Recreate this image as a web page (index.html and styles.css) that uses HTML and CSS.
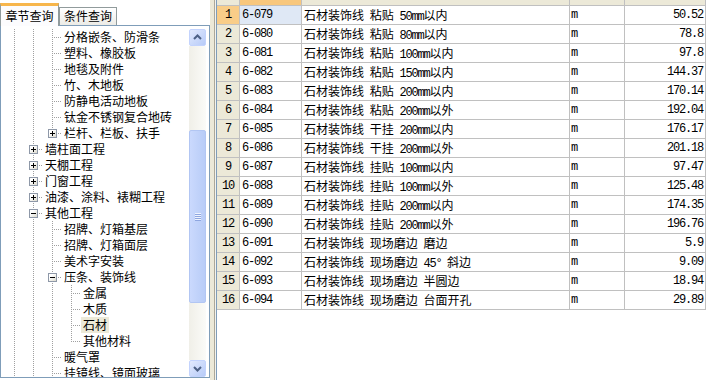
FILE: index.html
```html
<!DOCTYPE html>
<html lang="zh-CN">

<head>
    <meta charset="UTF-8">
    <title>定额查询</title>
    <link rel="stylesheet" href="styles.css">
</head>

<body>
    <div class="app">
        <!-- 左侧：章节树 -->
        <div class="side">
            <div class="tabs">
                <div class="tab active">章节查询</div>
                <div class="tab">条件查询</div>
            </div>
            <div class="tree_box">
                <div class="tree">
                    <div class="n"><span class="g"></span><span class="g"></span><span class="c"></span><span class="lb">分格嵌条、防滑条</span></div>
                    <div class="n"><span class="g"></span><span class="g"></span><span class="c"></span><span class="lb">塑料、橡胶板</span></div>
                    <div class="n"><span class="g"></span><span class="g"></span><span class="c"></span><span class="lb">地毯及附件</span></div>
                    <div class="n"><span class="g"></span><span class="g"></span><span class="c"></span><span class="lb">竹、木地板</span></div>
                    <div class="n"><span class="g"></span><span class="g"></span><span class="c"></span><span class="lb">防静电活动地板</span></div>
                    <div class="n"><span class="g"></span><span class="g"></span><span class="c"></span><span class="lb">钛金不锈钢复合地砖</span></div>
                    <div class="n"><span class="g"></span><span class="g"></span><span class="c last"><i class="box plus"></i></span><span class="lb">栏杆、栏板、扶手</span></div>
                    <div class="n"><span class="g"></span><span class="c"><i class="box plus"></i></span><span class="lb">墙柱面工程</span></div>
                    <div class="n"><span class="g"></span><span class="c"><i class="box plus"></i></span><span class="lb">天棚工程</span></div>
                    <div class="n"><span class="g"></span><span class="c"><i class="box plus"></i></span><span class="lb">门窗工程</span></div>
                    <div class="n"><span class="g"></span><span class="c"><i class="box plus"></i></span><span class="lb">油漆、涂料、裱糊工程</span></div>
                    <div class="n"><span class="g"></span><span class="c"><i class="box"></i></span><span class="lb">其他工程</span></div>
                    <div class="n"><span class="g"></span><span class="g"></span><span class="c"></span><span class="lb">招牌、灯箱基层</span></div>
                    <div class="n"><span class="g"></span><span class="g"></span><span class="c"></span><span class="lb">招牌、灯箱面层</span></div>
                    <div class="n"><span class="g"></span><span class="g"></span><span class="c"></span><span class="lb">美术字安装</span></div>
                    <div class="n"><span class="g"></span><span class="g"></span><span class="c"><i class="box"></i></span><span class="lb">压条、装饰线</span></div>
                    <div class="n"><span class="g"></span><span class="g"></span><span class="g"></span><span class="c"></span><span class="lb">金属</span></div>
                    <div class="n"><span class="g"></span><span class="g"></span><span class="g"></span><span class="c"></span><span class="lb">木质</span></div>
                    <div class="n"><span class="g"></span><span class="g"></span><span class="g"></span><span class="c"></span><span class="lb sel">石材</span></div>
                    <div class="n"><span class="g"></span><span class="g"></span><span class="g"></span><span class="c last"></span><span class="lb">其他材料</span></div>
                    <div class="n"><span class="g"></span><span class="g"></span><span class="c"></span><span class="lb">暖气罩</span></div>
                    <div class="n"><span class="g"></span><span class="g"></span><span class="c"></span><span class="lb">挂镜线、镜面玻璃</span></div>
                </div>
                <!-- 滚动条 -->
                <div class="vscroll">
                    <div class="sb_btn">
                        <svg width="15" height="15" viewBox="0 0 15 15"><polyline points="4,9 7.5,5.5 11,9" fill="none" stroke="#4d6185" stroke-width="2"/></svg>
                    </div>
                    <div class="sb_track">
                        <div class="sb_thumb"><span class="grip"></span></div>
                    </div>
                    <div class="sb_btn">
                        <svg width="15" height="15" viewBox="0 0 15 15"><polyline points="4,6 7.5,9.5 11,6" fill="none" stroke="#4d6185" stroke-width="2"/></svg>
                    </div>
                </div>
            </div>
        </div>
        <div class="splitter"></div>
        <!-- 右侧：定额列表 -->
        <div class="grid_area">
            <div class="row head"><div></div><div class="on"></div><div></div><div></div><div></div></div>
            <div class="row"><div class="hd cur">1</div><div class="code curcell">6-079</div><div class="name">石材装饰线 粘贴 <span class="en">50mm</span>以内</div><div class="unit">m</div><div class="qty">50.52</div></div>
            <div class="row"><div class="hd">2</div><div class="code">6-080</div><div class="name">石材装饰线 粘贴 <span class="en">80mm</span>以内</div><div class="unit">m</div><div class="qty">78.8</div></div>
            <div class="row"><div class="hd">3</div><div class="code">6-081</div><div class="name">石材装饰线 粘贴 <span class="en">100mm</span>以内</div><div class="unit">m</div><div class="qty">97.8</div></div>
            <div class="row"><div class="hd">4</div><div class="code">6-082</div><div class="name">石材装饰线 粘贴 <span class="en">150mm</span>以内</div><div class="unit">m</div><div class="qty">144.37</div></div>
            <div class="row"><div class="hd">5</div><div class="code">6-083</div><div class="name">石材装饰线 粘贴 <span class="en">200mm</span>以内</div><div class="unit">m</div><div class="qty">170.14</div></div>
            <div class="row"><div class="hd">6</div><div class="code">6-084</div><div class="name">石材装饰线 粘贴 <span class="en">200mm</span>以外</div><div class="unit">m</div><div class="qty">192.04</div></div>
            <div class="row"><div class="hd">7</div><div class="code">6-085</div><div class="name">石材装饰线 干挂 <span class="en">200mm</span>以内</div><div class="unit">m</div><div class="qty">176.17</div></div>
            <div class="row"><div class="hd">8</div><div class="code">6-086</div><div class="name">石材装饰线 干挂 <span class="en">200mm</span>以外</div><div class="unit">m</div><div class="qty">201.18</div></div>
            <div class="row"><div class="hd">9</div><div class="code">6-087</div><div class="name">石材装饰线 挂贴 <span class="en">100mm</span>以内</div><div class="unit">m</div><div class="qty">97.47</div></div>
            <div class="row"><div class="hd">10</div><div class="code">6-088</div><div class="name">石材装饰线 挂贴 <span class="en">100mm</span>以外</div><div class="unit">m</div><div class="qty">125.48</div></div>
            <div class="row"><div class="hd">11</div><div class="code">6-089</div><div class="name">石材装饰线 挂贴 <span class="en">200mm</span>以内</div><div class="unit">m</div><div class="qty">174.35</div></div>
            <div class="row"><div class="hd">12</div><div class="code">6-090</div><div class="name">石材装饰线 挂贴 <span class="en">200mm</span>以外</div><div class="unit">m</div><div class="qty">196.76</div></div>
            <div class="row"><div class="hd">13</div><div class="code">6-091</div><div class="name">石材装饰线 现场磨边 磨边</div><div class="unit">m</div><div class="qty">5.9</div></div>
            <div class="row"><div class="hd">14</div><div class="code">6-092</div><div class="name">石材装饰线 现场磨边 <span class="en">45°</span> 斜边</div><div class="unit">m</div><div class="qty">9.09</div></div>
            <div class="row"><div class="hd">15</div><div class="code">6-093</div><div class="name">石材装饰线 现场磨边 半圆边</div><div class="unit">m</div><div class="qty">18.94</div></div>
            <div class="row"><div class="hd">16</div><div class="code">6-094</div><div class="name">石材装饰线 现场磨边 台面开孔</div><div class="unit">m</div><div class="qty">29.89</div></div>
        </div>
    </div>
</body>

</html>
```

FILE: styles.css
```css
* {
    padding: 0;
    margin: 0;
    box-sizing: border-box;
}

body {
    width: 722px;
    height: 380px;
    overflow: hidden;
    background: #FFFFFF;
    font-family: "Noto Sans CJK SC", sans-serif;
    font-size: 12px;
    color: #000000;
}

.app {
    display: flex;
    height: 380px;
}

/* 左侧 */
.side {
    width: 210px;
    display: flex;
    flex-direction: column;
}

.tabs {
    height: 25px;
    display: flex;
    align-items: flex-end;
    position: relative;
    z-index: 2;
}

.tab {
    width: 58px;
    height: 18px;
    border: 1px solid #919b9c;
    border-bottom: none;
    background: linear-gradient(#FFFFFF, #ecebe6);
    text-align: center;
    line-height: 16px;
}

.tab.active {
    width: 59px;
    height: 23px;
    margin-bottom: -1px;
    border-top: 3px solid #f7b64c;
    background: #fcfcfe;
    line-height: 19px;
}

.tree_box {
    flex: 1;
    margin-bottom: 2px;
    border: 1px solid #7f9db9;
    padding: 3px 3px 0 3px;
    display: flex;
    overflow: hidden;
}

.tree {
    flex: 1;
    padding-left: 1px;
    overflow: hidden;
}

.n {
    display: flex;
    height: 16px;
    white-space: nowrap;
}

.g,
.c {
    flex: none;
    width: 19px;
    height: 16px;
    position: relative;
}

.g::before,
.c::before {
    content: "";
    position: absolute;
    left: 9px;
    top: 0;
    width: 1px;
    height: 16px;
    background: repeating-linear-gradient(to bottom, #a0a0a0 0 1px, transparent 1px 2px);
}

.c.last::before {
    height: 9px;
}

.c::after {
    content: "";
    position: absolute;
    left: 11px;
    top: 8px;
    width: 8px;
    height: 1px;
    background: repeating-linear-gradient(to right, #a0a0a0 0 1px, transparent 1px 2px);
}

.box {
    position: absolute;
    left: 5px;
    top: 4px;
    width: 9px;
    height: 9px;
    border: 1px solid #8e98a8;
    background: linear-gradient(135deg, #FFFFFF 30%, #dcdacd);
    z-index: 1;
}

.box::before {
    content: "";
    position: absolute;
    left: 1px;
    top: 3px;
    width: 5px;
    height: 1px;
    background: #000000;
}

.box.plus::after {
    content: "";
    position: absolute;
    left: 3px;
    top: 1px;
    width: 1px;
    height: 5px;
    background: #000000;
}

.lb {
    line-height: 16px;
    padding: 0 2px;
}

.lb.sel {
    background: #ece9d8;
}

/* 滚动条 */
.vscroll {
    flex: none;
    width: 17px;
    display: flex;
    flex-direction: column;
}

.sb_btn {
    height: 17px;
    border: 1px solid #c3d3fd;
    border-radius: 2px;
    background: linear-gradient(135deg, #e2eafe, #b7cbf8);
    display: flex;
    justify-content: center;
    align-items: center;
}

.sb_track {
    flex: 1;
    background: linear-gradient(to right, #f0efe8, #fbfbf8);
}

.sb_thumb {
    margin-top: 84px;
    height: 173px;
    border: 1px solid #b2c6f3;
    border-radius: 2px;
    background: linear-gradient(to right, #cad9fd, #b8ccf7);
    display: flex;
    justify-content: center;
    align-items: center;
}

.grip {
    width: 6px;
    height: 8px;
    background: repeating-linear-gradient(to bottom, #eef3fe 0 1px, #8ea6e0 1px 2px);
}

.splitter {
    width: 7px;
    background: linear-gradient(to right, #ece9d8 0 4px, #aca899 4px 5px, #f4f3ee 5px 6px, #7f9db9 6px);
}

/* 右侧表格 */
.grid_area {
    flex: 1;
    background: #FFFFFF;
}

.row {
    display: grid;
    grid-template-columns: 23px 62px 268px 55px 81px;
    height: 19px;
}

.row>div {
    border-right: 1px solid #c0c0c0;
    border-bottom: 1px solid #c0c0c0;
    line-height: 18px;
    white-space: nowrap;
    overflow: hidden;
}

.row.head {
    height: 6px;
}

.row.head>div {
    background: #ece9d8;
}

.row.head>div.on {
    background: #f8c77d;
}

.hd {
    background: #ece9d8;
    text-align: center;
    font-family: "Liberation Mono", monospace;
    letter-spacing: -1.2px;
}

.hd.cur {
    background: #f9cd88;
}

.code,
.unit,
.qty,
.en {
    font-family: "Liberation Mono", monospace;
    letter-spacing: -1.2px;
}

.code {
    padding-left: 2px;
}

.code.curcell {
    background: #dfe8f5;
}

.name {
    padding-left: 2px;
    word-spacing: 3px;
}

.en {
    word-spacing: 0;
}

.unit {
    padding-left: 1px;
}

.qty {
    text-align: right;
    padding-right: 2px;
}
```
